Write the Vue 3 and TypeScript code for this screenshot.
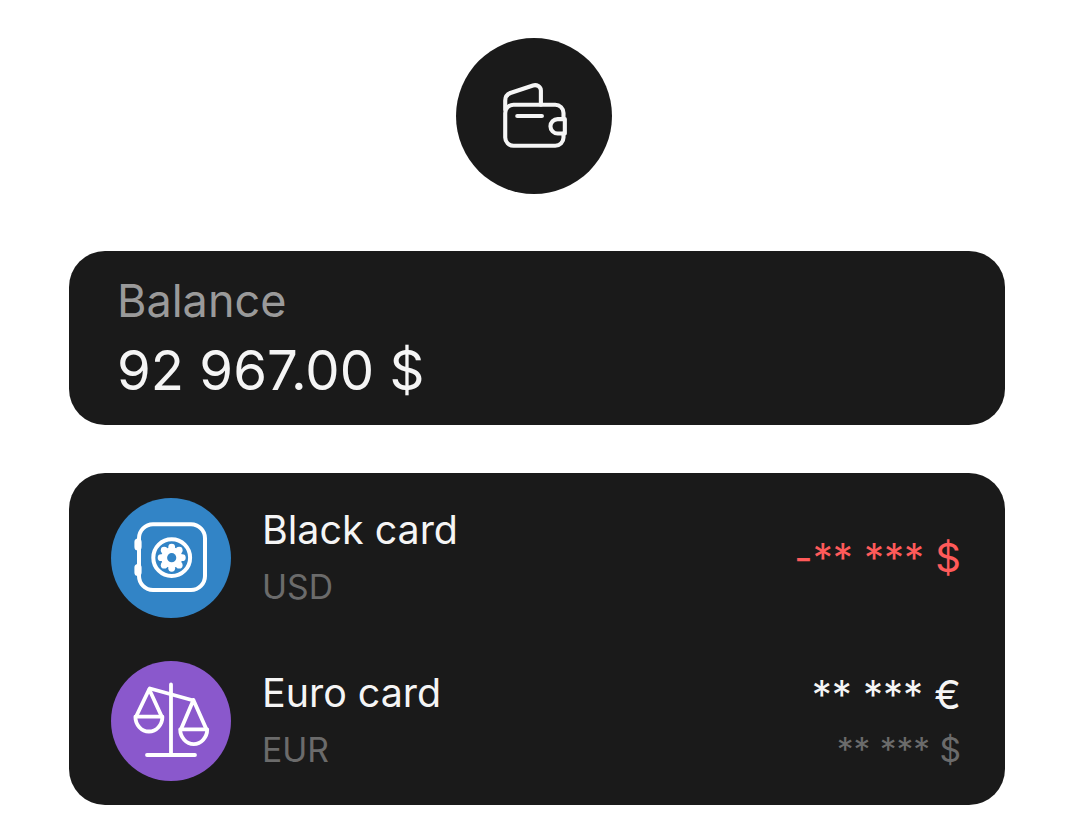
<script setup lang="ts">
type Account = {
  name: string
  currency: string
  amount: string
  converted?: string
  negative?: boolean
  tone: "blue" | "purple"
}

const accounts: Account[] = [
  { name: "Black card", currency: "USD", amount: "-** *** $", negative: true, tone: "blue" },
  { name: "Euro card", currency: "EUR", amount: "** *** €", converted: "** *** $", tone: "purple" },
]

const lobes = [0, 45, 90, 135, 180, 225, 270, 315].map((deg) => {
  const rad = (deg * Math.PI) / 180
  return { x: 60.7 + Math.cos(rad) * 10.6, y: 59.7 + Math.sin(rad) * 10.6 }
})
</script>

<template>
  <div class="page">
    <div class="top-icon">
      <svg width="74" height="74" viewBox="0 0 72 72" fill="none" stroke="#f5f5f5" stroke-width="4" stroke-linecap="round" stroke-linejoin="round">
        <path d="M64.7 39V33a8 8 0 0 0-8-8H16a8 8 0 0 0-8 8v24a8 8 0 0 0 8 8h40.7a8 8 0 0 0 8-8v-4" />
        <path d="M8 30V21a8 8 0 0 1 5-7.4L35 6.3c3.6-1.2 7.7 1 7.7 5V25" />
        <path d="M19.7 36h24" />
        <path d="M66 39h-7a7 7 0 0 0 0 14h7z" />
      </svg>
    </div>

    <section class="card balance">
      <div class="balance-label">Balance</div>
      <div class="balance-value">92 967.00 $</div>
    </section>

    <section class="card accounts">
      <div v-for="account in accounts" :key="account.name" class="row">
        <div class="avatar" :class="`avatar--${account.tone}`">
          <svg v-if="account.tone === 'blue'" width="120" height="120" viewBox="0 0 120 120" fill="none" stroke="#fff" stroke-linecap="round">
            <rect x="28" y="26.3" width="66" height="65.7" rx="14" stroke-width="4" />
            <path d="M27 44v5M27 69.5v5" stroke-width="7.2" />
            <circle cx="60.7" cy="59.7" r="18.4" stroke-width="4" />
            <g fill="#fff" stroke="none">
              <circle cx="60.7" cy="59.7" r="10.5" />
              <circle v-for="(lobe, i) in lobes" :key="i" :cx="lobe.x" :cy="lobe.y" r="3.4" />
            </g>
            <circle cx="60.7" cy="59.7" r="4.6" fill="#3284c6" stroke="none" />
          </svg>
          <svg v-else width="120" height="120" viewBox="0 0 120 120" fill="none" stroke="#fff" stroke-width="3.8" stroke-linecap="round" stroke-linejoin="round">
            <path d="M60 23.5V94M36 94h48" />
            <path d="M39 27.5l41.7 11.5" />
            <path d="M38.2 28.2L25 55.7M38.2 28.2L50.8 55.7" />
            <path d="M24.4 55.7h27a13.5 14.8 0 0 1-27 0z" />
            <path d="M82.4 39L70 68.3M82.4 39L95.4 68.3" />
            <path d="M69.2 68.3h27a13.5 14.8 0 0 1-27 0z" />
          </svg>
        </div>
        <div class="info">
          <div class="name">{{ account.name }}</div>
          <div class="currency">{{ account.currency }}</div>
        </div>
        <div class="amounts">
          <div class="amount" :class="{ 'amount--negative': account.negative }">{{ account.amount }}</div>
          <div v-if="account.converted" class="converted">{{ account.converted }}</div>
        </div>
      </div>
    </section>
  </div>
</template>

<style>
html,
body {
  background: #fff;
}
</style>

<style scoped>
.page {
  width: 936px;
  margin: 0 auto;
  padding-top: 38px;
  font-family: Inter, "Liberation Sans", sans-serif;
  display: flex;
  flex-direction: column;
}

.top-icon {
  width: 156px;
  height: 156px;
  border-radius: 50%;
  background: #1a1a1a;
  align-self: center;
  display: flex;
  align-items: center;
  justify-content: center;
  margin-right: 6px;
  margin-bottom: 57px;
}

.card {
  background: #1a1a1a;
  border-radius: 36px;
}

.balance {
  height: 174px;
  padding: 24px 48px 0;
  box-sizing: border-box;
  margin-bottom: 48px;
}

.balance-label {
  font-size: 45px;
  line-height: 52px;
  color: #9a9a9a;
}

.balance-value {
  margin-top: 13px;
  font-size: 54.5px;
  line-height: 60px;
  color: #f5f5f5;
}

.accounts {
  height: 332px;
  padding: 25px 44px 0 42px;
  box-sizing: border-box;
  display: flex;
  flex-direction: column;
  gap: 43px;
}

.row {
  display: flex;
  align-items: center;
  height: 120px;
}

.avatar {
  width: 120px;
  height: 120px;
  border-radius: 50%;
  flex: none;
}

.avatar svg {
  display: block;
}

.avatar--blue {
  background: #3284c6;
}

.avatar--purple {
  background: #8a58cc;
}

.info {
  margin-left: 31px;
  margin-bottom: 2px;
  flex: 1;
}

.name {
  font-size: 39.4px;
  line-height: 44px;
  color: #f5f5f5;
}

.currency {
  margin-top: 16px;
  font-size: 33.7px;
  line-height: 38px;
  color: #6b6b6b;
}

.amounts {
  text-align: right;
}

.amount {
  font-size: 40px;
  line-height: 44px;
  color: #f5f5f5;
}

.amount--negative {
  color: #ff5a5a;
}

.converted {
  margin-top: 14px;
  font-size: 33.5px;
  line-height: 38px;
  color: #6b6b6b;
}
</style>
